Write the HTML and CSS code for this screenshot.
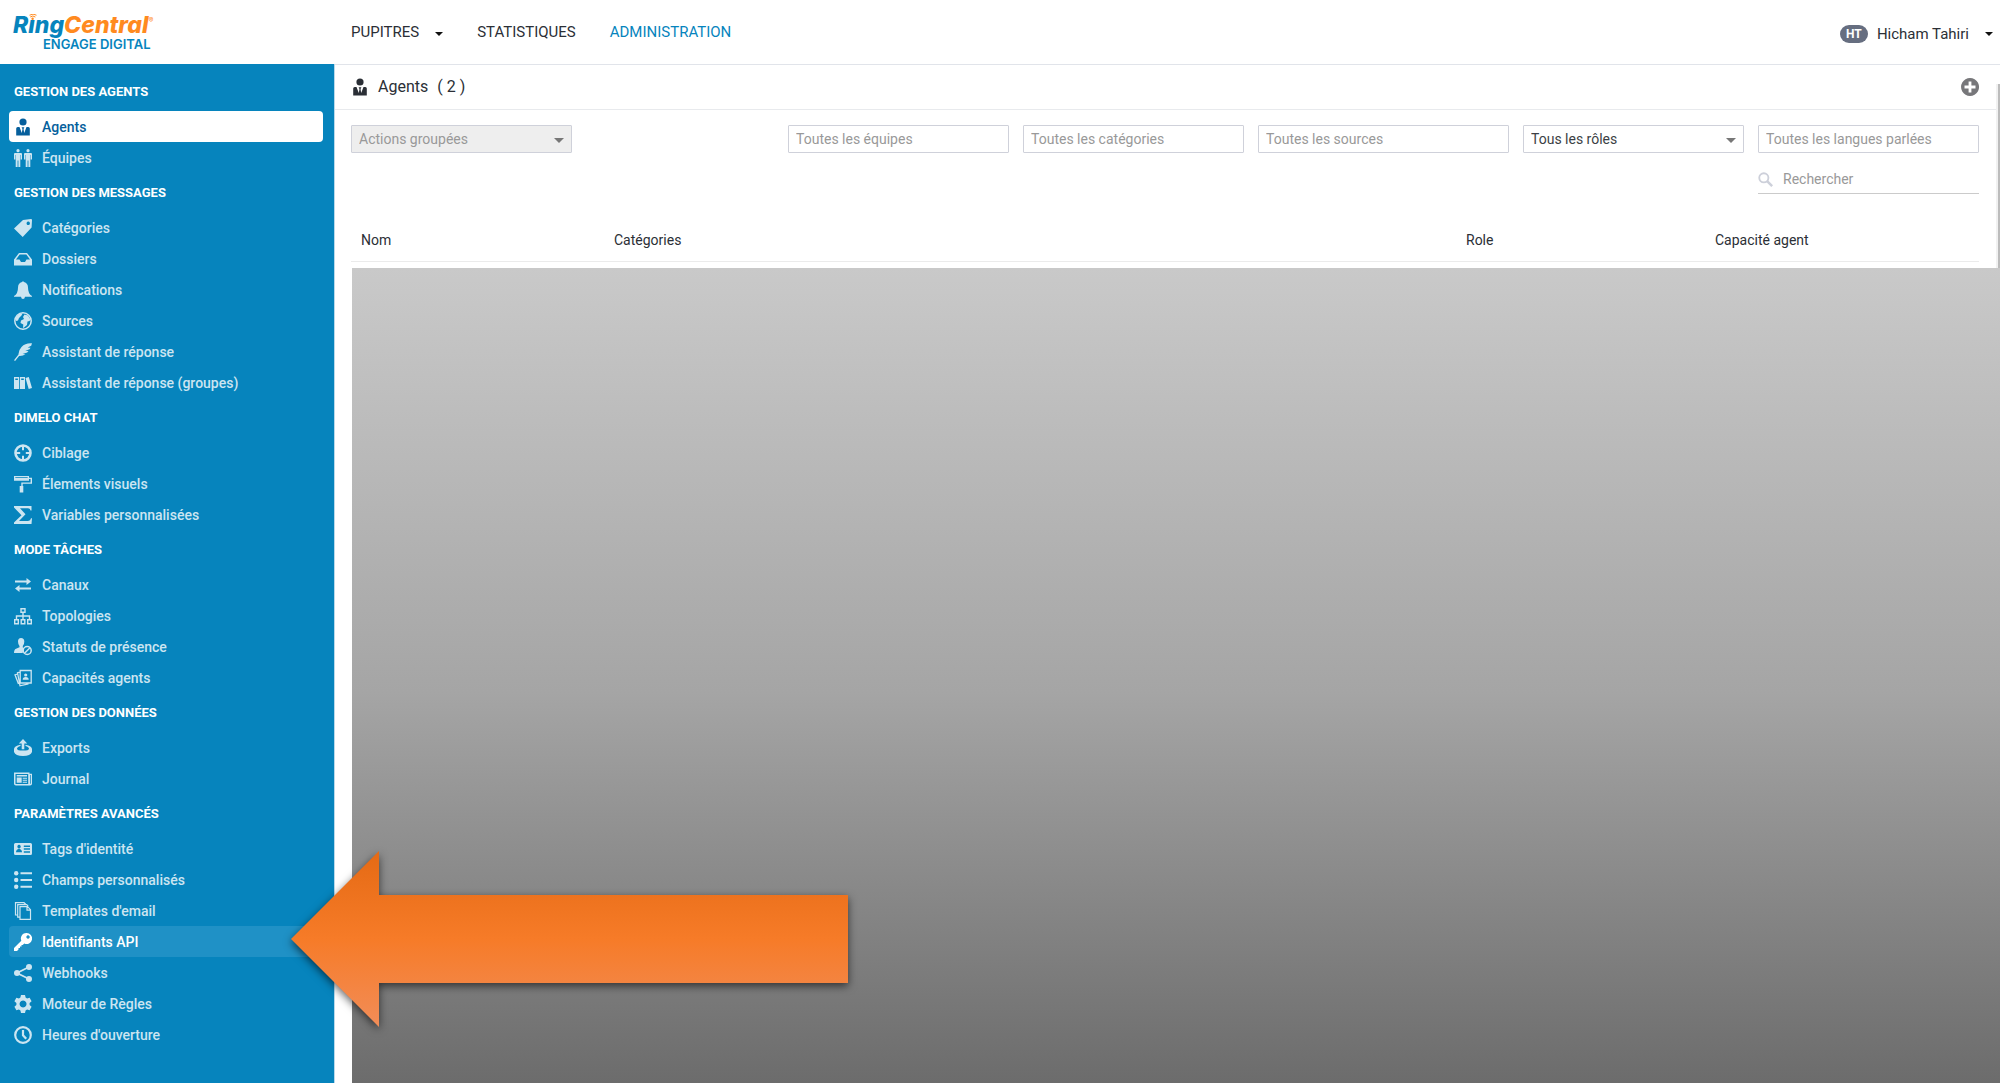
FILE: index.html
```html
<!DOCTYPE html>
<html lang="fr">
<head>
<meta charset="utf-8">
<meta name="viewport" content="width=device-width, initial-scale=1">
<title>RingCentral Engage Digital – Agents</title>
<link rel="stylesheet" href="styles.css">
</head>
<body>
<svg class="sprite" aria-hidden="true">
  <symbol id="i-agent" viewBox="0 0 18 18"><circle cx="9" cy="4" r="3.6"/><path d="M2.2 17.5V10.500q0-1.500 1.500-1.500H5.500l2.300 6 .7-4-.9-1.700h2.800l-.9 1.700.7 4 2.300-6h1.800q1.500 0 1.500 1.500v7z"/></symbol>
  <symbol id="i-team" viewBox="0 0 18 18"><circle cx="4" cy="1.700" r="1.600"/><circle cx="14" cy="1.700" r="1.600"/><path d="M0 5q0-1 1-1h6q1 0 1 1v5.500H6.700V6h-.4v12H4.400v-6.500h-.8V18H1.700V6h-.4v4.500H0zM10 5q0-1 1-1h6q1 0 1 1v5.500h-1.300V6h-.4v12h-1.900v-6.500h-.8V18h-1.900V6h-.4v4.500H10z"/></symbol>
  <symbol id="i-tag" viewBox="0 0 18 18"><path fill-rule="evenodd" d="M9 1L17 0q1 0 1 1l-.4 7.500L8.700 18 0 9.500zM14.200 2.600a1.700 1.700 0 1 0 .1 0z"/></symbol>
  <symbol id="i-inbox" viewBox="0 0 18 18"><path fill-rule="evenodd" d="M5 3h8l5 6.500V15.500H0V9.500zM5.700 4.500L2 9.500h3.500l1.500 2.500h4l1.500-2.500H16l-3.700-5z"/></symbol>
  <symbol id="i-bell" viewBox="0 0 18 18"><path d="M8 1q1-1.500 2 0 4 1 4 5.500 0 6.500 4 8.500v.8h-7q-.3 2.200-2 2.200t-2-2.200H0V15q4-2 4-8.500Q4 2 8 1z"/></symbol>
  <symbol id="i-globe" viewBox="0 0 18 18"><circle cx="9" cy="9" r="8.200" fill="none" stroke="currentColor" stroke-width="1.500"/><path d="M1.500 6L5 1.800l3.500-.3L7.500 3.500 5 6 4 8.500 2 9zM10.500 2.500L14 3.500l2.500 4-1 1.500-2 .5-.5 3.500-3 2.500-1 .5.3-3.500L6.500 11l.5-2.500 3-1.500L9 5z"/></symbol>
  <symbol id="i-feather" viewBox="0 0 18 18"><path d="M18 .3Q11.500-.3 7.500 4 4.300 7.500 4.500 11.500L0 17.200l1.100.8 4-5q3.900.2 6.400-1.800l-3-.2 4.700-1.400 1.300-1.700-3.200-.1L15.600 6.300l.9-1.600-2.800-.1L17.200 2.800z"/></symbol>
  <symbol id="i-books" viewBox="0 0 18 18"><path fill-rule="evenodd" d="M0 3h5.200v12H0zM1.300 4.500v1.600h2.600V4.500zM6 3h5v12H6zM7.200 4.500v1.600h2.600V4.500zM11.500 4L14.800 3 18 14l-3.300 1z"/></symbol>
  <symbol id="i-target" viewBox="0 0 18 18"><circle cx="9" cy="9" r="7.500" fill="none" stroke="currentColor" stroke-width="2.600"/><path d="M8 1h2v5.200H8zM8 11.800h2V17H8zM1 8h5.200v2H1zM11.800 8H17v2h-5.200z"/></symbol>
  <symbol id="i-roller" viewBox="0 0 18 18"><path fill-rule="evenodd" d="M0 1h15v1.700h3v6.100H8.700v2.200h.6v6.500H5.700V11h1.600V7.400h9.300V4.100H15v1.700H0zM1.300 2.200v.9h12.400v-.9z"/></symbol>
  <symbol id="i-sigma" viewBox="0 0 18 18"><path d="M0 0h17.500v4.600h-1q-.2-2.300-2.500-2.300H6l5.500 6L5 14.900h9q2.600 0 3-2.600h1L17.500 18H0v-1.600L7.500 9.300 0 1.500z"/></symbol>
  <symbol id="i-swap" viewBox="0 0 18 18"><path d="M1 4.500h11.500V2L17 5.500 12.500 9V6.500H1zM17 11.500H5.500V9L1 12.500 5.500 16v-2.500H17z"/></symbol>
  <symbol id="i-tree" viewBox="0 0 18 18"><g fill="none" stroke="currentColor" stroke-width="1.400"><path d="M7 1.700h4v3.600H7zM.7 12.700h3.600v4H.7zM7.200 12.700h3.600v4H7.200zM13.700 12.700h3.600v4h-3.600zM9 5.300v7.400M2.500 12.700V9h13v3.700"/></g></symbol>
  <symbol id="i-status" viewBox="0 0 18 18"><path d="M7 0q3.300 0 3.300 3.500 0 3-1.500 4.500v1.500l1.500.7Q8.500 12 8.700 15H0q0-3.500 2-4.200l3.500-1.500V8Q4 6.500 4 3.500 4 0 7 0z"/><g fill="none" stroke="currentColor" stroke-width="1.500"><circle cx="13.200" cy="12.500" r="4"/><path d="M10.500 15.300l5.500-5.500"/></g></symbol>
  <symbol id="i-cards" viewBox="0 0 18 18"><g fill="none" stroke="currentColor" stroke-width="1.300"><path d="M6.200 1.500h11v12.500h-11zM6.200 3L3.500 3.800 6 16.800l8.500-2M3.500 5L1 5.800 4.500 15"/></g><circle cx="11.700" cy="6" r="1.600"/><path d="M8.700 10.800q0-2.800 3-2.800t3 2.800z"/></symbol>
  <symbol id="i-export" viewBox="0 0 18 18"><path d="M9 0l4.200 4.600h-2.900v5.600H7.700V4.600H4.800z"/><path fill-rule="evenodd" d="M6.500 7Q3 8 3 9.700q0 1.900 6 1.900t6-1.900Q15 8 11.500 7V5.700Q18 7 18 10v3q-1.500 4-9 4t-9-4v-3q0-3 6.500-4.300z"/></symbol>
  <symbol id="i-journal" viewBox="0 0 18 18"><path fill-rule="evenodd" d="M0 2.500h15.500v1.300H18v10q0 1.700-2 1.700H2q-2 0-2-1.700zM1.500 4v9.500q0 .6.700.6h12V4zM16 5v9l.7-.4V5z"/><path d="M2.700 5h10.300v1.400H2.700zM2.700 7.500h5v5.300h-5zM8.700 7.700H13v1H8.700zM8.700 9.700H13v1H8.700zM8.700 11.700H13v1H8.700z"/></symbol>
  <symbol id="i-idcard" viewBox="0 0 18 18"><path fill-rule="evenodd" d="M1.500 3h15Q18 3 18 4.500v9q0 1.500-1.500 1.500h-15Q0 15 0 13.500v-9Q0 3 1.500 3zM5 4.700a1.700 1.900 0 1 0 .1 0zM2 12.300h6q0-2.800-3-3.500-3 .7-3 3.500zM9.800 5.500V7H16V5.500zM9.800 8.300v1.500H16V8.300zM9.800 11.200v1.500H16v-1.500z"/></symbol>
  <symbol id="i-list" viewBox="0 0 18 18"><circle cx="2.200" cy="2.300" r="2.200"/><circle cx="2.200" cy="9" r="2.200"/><circle cx="2.200" cy="15.700" r="2.200"/><path d="M6.500 1.300H18v2H6.500zM6.500 8H18v2H6.500zM6.500 14.700H18v2H6.500z"/></symbol>
  <symbol id="i-copies" viewBox="0 0 18 18"><g fill="none" stroke="currentColor" stroke-width="1.200"><path d="M6 4.700h7.500l3 3v9.700H6zM13 4.900v3.200h3.300M6 15.200H3.700V2.700h9L14.300 4.300M3.700 13H1.500V.7H10l1.700 1.600"/></g></symbol>
  <symbol id="i-key" viewBox="0 0 18 18"><path fill-rule="evenodd" d="M12.500 0A5.500 5.500 0 1 1 10.300 10.500L8.700 12H7.500v1.500H6V15H4.500v1.500L3 18H0v-3l7.300-7.300A5.500 5.500 0 0 1 12.500 0zM14 2.300a1.700 1.700 0 1 0 .1 0z"/></symbol>
  <symbol id="i-share" viewBox="0 0 18 18"><circle cx="3" cy="9" r="3"/><circle cx="15" cy="3" r="3"/><circle cx="15" cy="15" r="3"/><path d="M15 3L3 9l12 6" fill="none" stroke="currentColor" stroke-width="1.800"/></symbol>
  <symbol id="i-gear" viewBox="0 0 18 18"><path fill-rule="evenodd" d="M7 0h4l.6 2.600 1.500.9 2.500-.8 2 3.500-2 1.900v1.800l2 1.900-2 3.500-2.500-.8-1.500.9L11 18H7l-.6-2.600-1.500-.9-2.500.8-2-3.500 2-1.900V8.100l-2-1.900 2-3.500 2.500.8 1.500-.9zM9 5.500a3.500 3.500 0 1 0 .1 0z"/></symbol>
  <symbol id="i-clock" viewBox="0 0 18 18"><g fill="none" stroke="currentColor" stroke-width="2.200"><circle cx="9" cy="9" r="7.800"/><path d="M9 4v5.300l3.200 3.500"/></g></symbol>
  <symbol id="i-plus" viewBox="0 0 18 18"><path fill-rule="evenodd" d="M9 0a9 9 0 1 0 .1 0zM7.600 3.500h2.800v4.100h4.100v2.800h-4.100v4.100H7.600v-4.100H3.500V7.600h4.100z"/></symbol>
  <symbol id="i-search" viewBox="0 0 18 18"><g fill="none" stroke="currentColor" stroke-width="2.200"><circle cx="7" cy="7" r="5.500"/><path d="M11 11l6 6" stroke-width="3"/></g></symbol>
</svg>

<header class="topbar">
  <a class="logo" href="#">
    <span class="logo-name"><span class="ring">R<span class="logo-i">i<svg class="waves" viewBox="0 0 8 6" aria-hidden="true"><path class="waves-back" d="M0 0h8v6H0z"/><circle cx="3.600" cy="4.800" r="1.200"/><path class="waves-arc" d="M1.200 3q2.600-2 5.200 0M.5 1.200Q4-1 7.500 1.200"/></svg></span>ng</span>Central<sup>®</sup></span>
    <span class="logo-sub">ENGAGE DIGITAL</span>
  </a>
  <nav class="mainnav" aria-label="Navigation principale">
    <a href="#">PUPITRES<span class="caret caret-nav"></span></a>
    <a href="#">STATISTIQUES</a>
    <a class="current" href="#">ADMINISTRATION</a>
  </nav>
  <button class="user" type="button"><span class="badge">HT</span>Hicham Tahiri<span class="caret"></span></button>
</header>

<div class="layout">
  <nav class="sidebar" aria-label="Administration">
    <h2>GESTION DES AGENTS</h2>
    <ul>
      <li><a class="active" href="#"><svg><use href="#i-agent"/></svg>Agents</a></li>
      <li><a href="#"><svg><use href="#i-team"/></svg>Équipes</a></li>
    </ul>
    <h2>GESTION DES MESSAGES</h2>
    <ul>
      <li><a href="#"><svg><use href="#i-tag"/></svg>Catégories</a></li>
      <li><a href="#"><svg><use href="#i-inbox"/></svg>Dossiers</a></li>
      <li><a href="#"><svg><use href="#i-bell"/></svg>Notifications</a></li>
      <li><a href="#"><svg><use href="#i-globe"/></svg>Sources</a></li>
      <li><a href="#"><svg><use href="#i-feather"/></svg>Assistant de réponse</a></li>
      <li><a href="#"><svg><use href="#i-books"/></svg>Assistant de réponse (groupes)</a></li>
    </ul>
    <h2>DIMELO CHAT</h2>
    <ul>
      <li><a href="#"><svg><use href="#i-target"/></svg>Ciblage</a></li>
      <li><a href="#"><svg><use href="#i-roller"/></svg>Élements visuels</a></li>
      <li><a href="#"><svg><use href="#i-sigma"/></svg>Variables personnalisées</a></li>
    </ul>
    <h2>MODE TÂCHES</h2>
    <ul>
      <li><a href="#"><svg><use href="#i-swap"/></svg>Canaux</a></li>
      <li><a href="#"><svg><use href="#i-tree"/></svg>Topologies</a></li>
      <li><a href="#"><svg><use href="#i-status"/></svg>Statuts de présence</a></li>
      <li><a href="#"><svg><use href="#i-cards"/></svg>Capacités agents</a></li>
    </ul>
    <h2>GESTION DES DONNÉES</h2>
    <ul>
      <li><a href="#"><svg><use href="#i-export"/></svg>Exports</a></li>
      <li><a href="#"><svg><use href="#i-journal"/></svg>Journal</a></li>
    </ul>
    <h2>PARAMÈTRES AVANCÉS</h2>
    <ul>
      <li><a href="#"><svg><use href="#i-idcard"/></svg>Tags d'identité</a></li>
      <li><a href="#"><svg><use href="#i-list"/></svg>Champs personnalisés</a></li>
      <li><a href="#"><svg><use href="#i-copies"/></svg>Templates d'email</a></li>
      <li><a class="hovered" href="#"><svg><use href="#i-key"/></svg>Identifiants API</a></li>
      <li><a href="#"><svg><use href="#i-share"/></svg>Webhooks</a></li>
      <li><a href="#"><svg><use href="#i-gear"/></svg>Moteur de Règles</a></li>
      <li><a href="#"><svg><use href="#i-clock"/></svg>Heures d'ouverture</a></li>
    </ul>
  </nav>

  <main class="content">
    <div class="panel">
      <div class="panel-main">
        <div class="page-head">
          <h1><svg><use href="#i-agent"/></svg>Agents <span class="count">( 2 )</span></h1>
          <button class="add" type="button" aria-label="Ajouter un agent"><svg><use href="#i-plus"/></svg></button>
        </div>
        <form class="filters">
          <div class="select"><select class="field" aria-label="Actions groupées" disabled><option>Actions groupées</option></select></div>
          <div class="criteria">
            <input class="field" type="text" placeholder="Toutes les équipes" aria-label="Équipes">
            <input class="field" type="text" placeholder="Toutes les catégories" aria-label="Catégories">
            <input class="field wide" type="text" placeholder="Toutes les sources" aria-label="Sources">
            <div class="select"><select class="field" aria-label="Rôles"><option>Tous les rôles</option></select></div>
            <input class="field" type="text" placeholder="Toutes les langues parlées" aria-label="Langues parlées">
            <label class="search"><svg><use href="#i-search"/></svg><input type="text" placeholder="Rechercher" aria-label="Rechercher"></label>
          </div>
        </form>
        <table class="agents">
          <thead><tr><th class="c-name">Nom</th><th>Catégories</th><th class="c-role">Role</th><th class="c-cap">Capacité agent</th></tr></thead>
        </table>
      </div>
      <div class="scrollbar" aria-hidden="true"></div>
    </div>
    <div class="mask"></div>
  </main>
</div>

<svg class="arrow" viewBox="0 0 557 176" aria-hidden="true">
  <defs><linearGradient id="arrow-fill" x1="0" y1="0" x2="0" y2="1"><stop offset="0" stop-color="#e56a14"/><stop offset=".5" stop-color="#f67b28"/><stop offset="1" stop-color="#f28d58"/></linearGradient></defs>
  <path fill="url(#arrow-fill)" d="M0 88L88 0v44h469v88H88v44z"/>
</svg>
</body>
</html>
```
FILE: styles.css
```css
* { box-sizing: border-box; }

body {
  position: relative;
  display: flex;
  flex-direction: column;
  min-height: 100vh;
  margin: 0;
  background: #fff;
  color: #2b2f36;
  font: 15px/20px Roboto, "Liberation Sans", sans-serif;
}

a { color: inherit; text-decoration: none; }
button { padding: 0; border: 0; background: none; color: inherit; font: inherit; cursor: pointer; }
svg { fill: currentColor; }
.sprite { position: absolute; width: 0; height: 0; }

/* Top bar */
.topbar {
  display: flex;
  align-items: center;
  height: 65px;
  padding-right: 7px;
  border-bottom: 1px solid #e1e4ea;
}
.logo { width: 351px; padding-left: 13px; color: #0684bd; }
.logo-name {
  display: block;
  color: #ff8a1f;
  font: italic 800 23px/24px Inter, sans-serif;
}
.logo-name sup { font-size: 7px; font-weight: 400; line-height: 1; vertical-align: 10px; }
.ring { color: #0684bd; }
.logo-i { position: relative; }
.waves { position: absolute; top: 3px; left: 1px; width: 8px; height: 6px; fill: #ff8a1f; }
.waves-back { fill: #fff; }
.waves-arc { fill: none; stroke: #ff8a1f; stroke-width: 1; }
.logo-sub {
  display: block;
  padding-left: 30px;
  font: 600 13px/14px Inter, sans-serif;
}
.mainnav { display: flex; flex: 1; gap: 34px; }
.mainnav .current { color: #0684bd; }
.caret {
  display: inline-block;
  margin-left: 16px;
  border: 4px solid transparent;
  border-top-color: #111;
  border-bottom: 0;
}
.caret-nav { vertical-align: 1px; }
.user { display: flex; align-items: center; padding-top: 4px; }
.badge {
  width: 28px;
  height: 18px;
  margin-right: 9px;
  border-radius: 9px;
  background: #666e80;
  color: #fff;
  font-size: 12px;
  font-weight: 700;
  line-height: 18px;
  text-align: center;
}

/* Sidebar */
.layout { display: flex; flex: 1; }
.sidebar {
  flex: 0 0 335px;
  margin-top: -1px;
  padding: 8px 11px 0 9px;
  border-right: 1px solid #b9d9ea;
  background: #0684bd;
}
.sidebar h2 { margin: 0; padding-left: 5px; color: #fff; font-size: 13px; font-weight: 700; line-height: 39px; }
.sidebar ul { margin: 0; padding: 0; list-style: none; }
.sidebar a {
  display: flex;
  align-items: center;
  height: 31px;
  padding-left: 5px;
  border-radius: 4px;
  color: #cce5f1;
  font-size: 14px;
  font-weight: 500;
}
.sidebar svg { width: 18px; height: 18px; margin-right: 10px; }
.sidebar .active { background: #fff; color: #065f9c; }
.sidebar .hovered { background: #1f91c6; color: #fff; }

/* Content */
.content { display: flex; flex: 1; flex-direction: column; min-width: 0; }
.panel { display: flex; }
.panel-main { flex: 1; min-width: 0; }
.scrollbar { width: 4px; margin-top: 19px; border-left: 2px solid #f1f1f1; background: #bcbcbc; }

.page-head {
  display: flex;
  align-items: center;
  justify-content: space-between;
  height: 45px;
  padding: 0 17px 0 16px;
  border-bottom: 1px solid #e8eaed;
}
.page-head h1 { display: flex; align-items: center; margin: 0; font-size: 16px; font-weight: 400; }
.page-head h1 svg { width: 18px; height: 18px; margin-right: 9px; }
.count { margin-left: 9px; }
.add { height: 18px; color: #77777a; }
.add svg { display: block; width: 18px; height: 18px; }

.filters { display: flex; justify-content: space-between; padding: 15px 17px 0 16px; }
.criteria { display: flex; flex-wrap: wrap; justify-content: flex-end; gap: 12px 14px; }
.select { position: relative; width: 221px; }
.select::after {
  position: absolute;
  top: 13px;
  right: 8px;
  border: 5px solid transparent;
  border-top-color: #777;
  border-bottom: 0;
  content: "";
}
.field {
  width: 221px;
  height: 28px;
  padding: 0 7px;
  border: 1px solid #cfd1da;
  border-radius: 1px;
  background: #fff;
  color: #3c3f45;
  font: inherit;
  font-size: 14px;
  appearance: none;
}
.field.wide { width: 251px; }
.field:disabled { background: #eee; color: #999; opacity: 1; }
::placeholder { color: #999; opacity: 1; }
.search { display: flex; align-items: center; width: 221px; height: 29px; border-bottom: 1px solid #cbcbcb; }
.search svg { width: 15px; height: 15px; margin-right: 10px; color: #cdd0da; }
.search input { flex: 1; min-width: 0; padding: 0; border: 0; outline: 0; font: inherit; font-size: 14px; }

.agents {
  width: calc(100% - 33px);
  margin: 26px 17px 6px 16px;
  border-collapse: collapse;
  table-layout: fixed;
}
.agents th {
  height: 41px;
  padding: 0 10px;
  border-bottom: 1px solid #ebebeb;
  font-size: 14px;
  font-weight: 400;
  text-align: left;
}
.c-name { width: 253px; }
.c-role { width: 249px; }
.c-cap { width: 274px; }

.mask { flex: 1; margin-left: 17px; background: linear-gradient(#c9c9c9, #a5a5a5 52%, #6c6c6c); }

/* Callout laid over the page */
.arrow {
  position: absolute;
  top: 851px;
  left: 291px;
  width: 557px;
  height: 176px;
  overflow: visible;
  filter: drop-shadow(0 3px 4px rgba(0, 0, 0, .6));
}
```
